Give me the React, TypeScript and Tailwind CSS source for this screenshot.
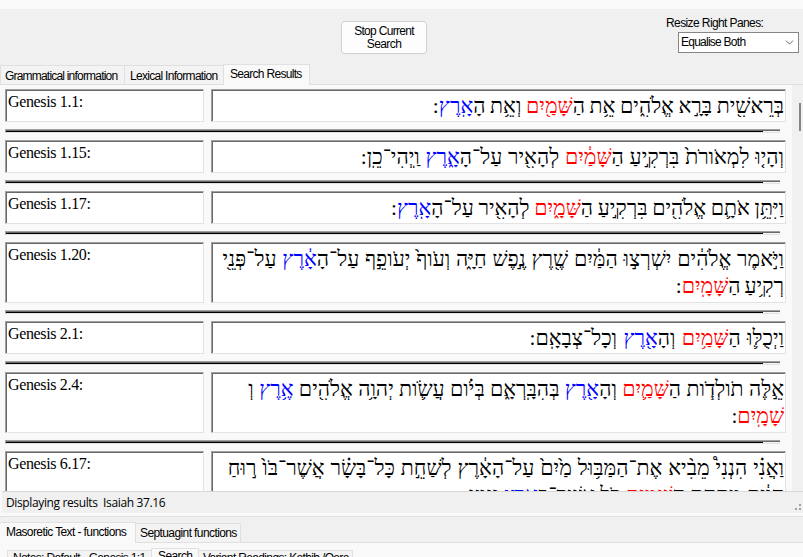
import { ChevronDown } from 'lucide-react';

type Tone = 'k' | 'r' | 'b';
type Line = { cls: string; runs: [string, Tone][] };
type Verse = { label: string; lines: Line[]; tall?: boolean };

const tones = { k: 'text-black', r: 'text-[#ff0000]', b: 'text-[#0000ff]' };

const verses: Verse[] = [
  { label: 'Genesis 1.1:', lines: [{ cls: '[word-spacing:-0.7px]', runs: [['בְּרֵאשִׁ֖ית בָּרָ֣א אֱלֹהִ֑ים אֵ֥ת הַ', 'k'], ['שָּׁמַ֖יִם', 'r'], [' וְאֵ֥ת הָ', 'k'], ['אָֽרֶץ', 'b'], [':', 'k']] }] },
  { label: 'Genesis 1.15:', lines: [{ cls: '[word-spacing:0.4px]', runs: [['וְהָי֤וּ לִמְאֹורֹת֙ בִּרְקִ֣יעַ הַ', 'k'], ['שָּׁמַ֔יִם', 'r'], [' לְהָאִ֖יר עַל־הָ', 'k'], ['אָ֑רֶץ', 'b'], [' וַֽיְהִי־כֵֽן', 'k'], [':', 'k']] }] },
  { label: 'Genesis 1.17:', lines: [{ cls: '[word-spacing:-0.7px]', runs: [['וַיִּתֵּ֥ן אֹתָ֛ם אֱלֹהִ֖ים בִּרְקִ֣יעַ הַ', 'k'], ['שָּׁמָ֑יִם', 'r'], [' לְהָאִ֖יר עַל־הָ', 'k'], ['אָֽרֶץ', 'b'], [':', 'k']] }] },
  { label: 'Genesis 1.20:', tall: true, lines: [
    { cls: '[word-spacing:0.5px]', runs: [['וַיֹּ֣אמֶר אֱלֹהִ֔ים יִשְׁרְצ֣וּ הַמַּ֔יִם שֶׁ֖רֶץ נֶ֣פֶשׁ חַיָּ֑ה וְעֹוף֙ יְעֹופֵ֣ף עַל־הָ', 'k'], ['אָ֔רֶץ', 'b'], [' עַל־פְּנֵ֖י', 'k']] },
    { cls: '[word-spacing:-1.5px]', runs: [['רְקִ֥יעַ הַ', 'k'], ['שָּׁמָֽיִם', 'r'], [':', 'k']] }] },
  { label: 'Genesis 2.1:', lines: [{ cls: '[word-spacing:1px]', runs: [['וַיְכֻלּ֛וּ הַ', 'k'], ['שָּׁמַ֥יִם', 'r'], [' וְהָ', 'k'], ['אָ֖רֶץ', 'b'], [' וְכָל־צְבָאָֽם', 'k'], [':', 'k']] }] },
  { label: 'Genesis 2.4:', tall: true, lines: [
    { cls: '', runs: [['אֵ֣לֶּה תֹולְדֹ֧ות הַ', 'k'], ['שָּׁמַ֛יִם', 'r'], [' וְהָ', 'k'], ['אָ֖רֶץ', 'b'], [' בְּהִבָּֽרְאָ֑ם בְּיֹ֗ום עֲשֹׂ֛ות יְהוָ֥ה אֱלֹהִ֖ים ', 'k'], ['אֶ֥רֶץ', 'b'], [' וְ', 'k']] },
    { cls: '', runs: [['שָׁמָֽיִם', 'r'], [':', 'k']] }] },
  { label: 'Genesis 6.17:', tall: true, lines: [
    { cls: '[word-spacing:0.6px]', runs: [['וַאֲנִ֗י הִנְנִי֩ מֵבִ֨יא אֶת־הַמַּבּ֥וּל מַ֙יִם֙ עַל־הָאָ֔רֶץ לְשַׁחֵ֣ת כָּל־בָּשָׂ֗ר אֲשֶׁר־בֹּו֙ ר֣וּחַ', 'k']] },
    { cls: '', runs: [['חַיִּ֔ים מִתַּ֖חַת הַ', 'k'], ['שָּׁמָ֑יִם', 'r'], [' כֹּ֥ל אֲשֶׁר־בָּ', 'k'], ['אָ֖רֶץ', 'b'], [' יִגְוָֽע', 'k'], [':', 'k']] }] },
];

const sunken = 'border border-t-[#a0a0a0] border-l-[#a0a0a0] border-r-[#e3e3e3] border-b-[#e3e3e3] bg-white shadow-[inset_1px_1px_0_#696969]';

function VerseRow({ verse }: { verse: Verse }) {
  const h = verse.tall ? 'h-[61px]' : 'h-[33px]';
  return (
    <div className="shrink-0">
      <div className={`flex gap-[7px] ${h}`}>
        <div className={`w-[199px] ${sunken} pl-[2px] pt-[1px] font-['Liberation_Serif',serif] text-[16px] leading-[22px] tracking-[-0.35px] text-black`}>{verse.label}</div>
        <div dir="rtl" className={`w-[575px] ${sunken} pr-[1px] pt-[2px] font-['Liberation_Serif',serif] text-[21.33px] leading-[28px] tracking-normal`}>
          {verse.lines.map((line, i) => (
            <div key={i} className={`h-[27px] whitespace-nowrap ${line.cls}`}>
              {line.runs.map(([text, tone], j) => <span key={j} className={tones[tone]}>{text}</span>)}
            </div>
          ))}
        </div>
      </div>
      <div className="my-[7px] h-[4px] w-[775px] border-b border-l border-t border-b-[#e3e3e3] border-l-[#a0a0a0] border-t-[#a0a0a0] bg-[#f5f5f5]">
        <div className="h-px bg-[#696969]" />
        <div className="h-px w-[757px] bg-black" />
      </div>
    </div>
  );
}

export default function App() {
  return (
    <div className="flex h-[557px] w-[803px] flex-col overflow-hidden bg-[#f0f0f0] font-['Liberation_Sans',sans-serif] text-[12px] tracking-[-0.6px] text-black">
      <div className="h-[9px] shrink-0 bg-[#f9f9f9]" />
      <div className="flex h-[55px] shrink-0">
        <button className="ml-[341px] mt-[12px] h-[33px] w-[86px] rounded-[4px] border border-[#d0d0d0] bg-[#fdfdfd] text-center leading-[13px]">
          <span className="block tracking-[-0.7px]">Stop Current</span>
          <span className="block">Search</span>
        </button>
        <div className="ml-[239px] mt-[7px]">
          <div className="h-[16px] leading-[15px]">Resize Right Panes:</div>
          <div className="ml-[12px] flex h-[21px] w-[121px] items-center justify-between border border-[#868686] bg-white pl-[2px] pr-[2px]">
            <span className="pb-[2px] tracking-[-0.75px]">Equalise Both</span>
            <ChevronDown size={13} strokeWidth={1.7} className="text-[#555]" />
          </div>
        </div>
      </div>
      <div className="flex h-[21px] shrink-0 items-end border-b border-[#e0e0e0]">
        <div className="h-[19px] w-[124px] whitespace-nowrap border-l border-t border-[#e0e0e0] bg-[#f3f3f3] pl-[4px] leading-[20px] tracking-[-0.8px]">Grammatical information</div>
        <div className="h-[19px] w-[99px] whitespace-nowrap border-l border-t border-[#e0e0e0] bg-[#f3f3f3] pl-[5px] leading-[20px] tracking-[-0.7px]">Lexical Information</div>
        <div className="-mb-px h-[21px] w-[87px] whitespace-nowrap border-x border-t border-[#e0e0e0] bg-[#f9f9f9] pl-[6px] leading-[19px] tracking-[-0.7px]">Search Results</div>
      </div>
      <div className="flex h-[406px] shrink-0 bg-[#f9f9f9]">
        <div className="flex w-[792px] flex-col overflow-hidden pl-[5px] pt-[4px]">
          {verses.map(v => <VerseRow key={v.label} verse={v} />)}
        </div>
        <div className="w-[11px] bg-[#f0f0f0] pl-[7px] pt-[18px]">
          <div className="h-[28px] w-[2px] bg-[#858585]" />
        </div>
      </div>
      <div className="flex h-[25px] shrink-0 flex-col bg-[#f9f9f9] pl-[2px]">
        <div className="flex h-[22px] justify-between border-t border-[#d7d7d7] bg-[#f0f0f0] pl-[4px] font-['Open_Sans',sans-serif] text-[12px] leading-[22px] tracking-[-0.37px]">
          <span className="whitespace-pre">Displaying results  Isaiah 37.16</span>
          <svg width="9" height="21" className="text-[#a0a0a0]" fill="currentColor"><path d="M5 12h2v2h-2zM1 16h2v2h-2zM5 16h2v2h-2z" /></svg>
        </div>
      </div>
      <div className="flex h-[27px] shrink-0 items-end border-b border-t border-[#e0e0e0]">
        <div className="-mb-px h-[21px] w-[136px] whitespace-nowrap border-r border-t border-[#e0e0e0] bg-[#f9f9f9] pl-[6px] leading-[18px]">Masoretic Text - functions</div>
        <div className="h-[19px] w-[105px] whitespace-nowrap border-r border-t border-[#e0e0e0] bg-[#f3f3f3] pl-[4px] leading-[19px]">Septuagint functions</div>
      </div>
      <div className="flex grow items-start overflow-hidden bg-[#f9f9f9] pl-[7px] pt-[5px]">
        <div className="mt-[2px] h-[19px] w-[144px] whitespace-nowrap border-l border-t border-[#e0e0e0] bg-[#f3f3f3] pl-[5px] leading-[15px] tracking-[-0.65px]">Notes: Default - Genesis 1:1</div>
        <div className="h-[21px] w-[48px] border-x border-t border-[#e0e0e0] bg-[#f9f9f9] pl-[6px] leading-[15px]">Search</div>
        <div className="mt-[2px] h-[19px] w-[154px] whitespace-nowrap border-r border-t border-[#e0e0e0] bg-[#f3f3f3] pl-[4px] leading-[15px] tracking-[-0.65px]">Variant Readings: Kethib /Qere</div>
      </div>
    </div>
  );
}
